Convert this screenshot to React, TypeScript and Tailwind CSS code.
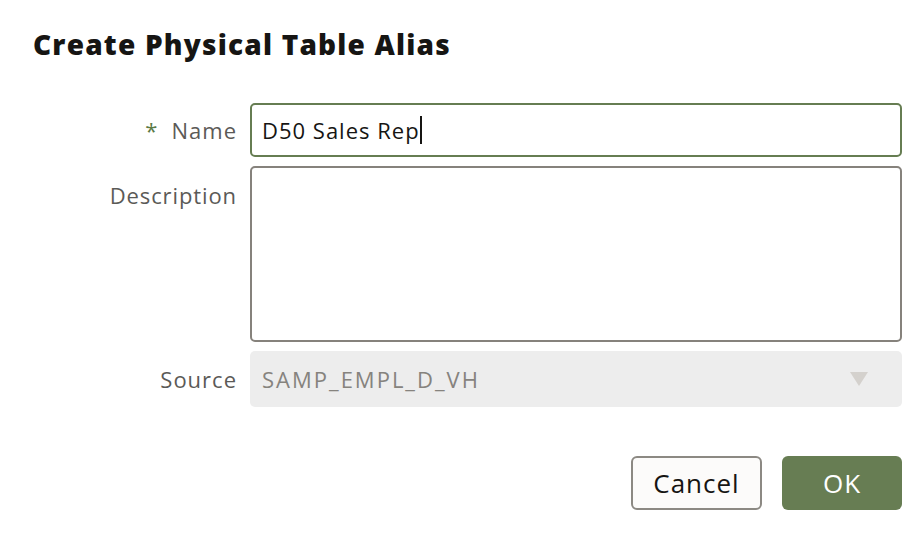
export default function App() {
  return (
    <div className="w-[924px] h-[540px] bg-white font-['Open_Sans',sans-serif] text-[#161513] overflow-hidden">
      <h1 className="pl-[33px] pt-[24px] text-[28px] font-extrabold leading-[40px] tracking-[1.2px]">
        Create Physical Table Alias
      </h1>

      <div className="mt-[39px] grid grid-cols-[237px_652px] gap-x-[13px] gap-y-[9px]">
        <label className="flex items-center justify-end text-[22px] text-[#5b5a57] tracking-[1px]">
          <span className="mr-[13px] text-[#5b7a45]">*</span>Name
        </label>
        <div className="h-[54px] rounded-[5px] border-2 border-[#667d52] flex items-center px-[10px] text-[22px] tracking-[1px]">
          D50 Sales Rep
          <span className="ml-[0px] w-[2px] h-[28px] bg-[#161513]" />
        </div>

        <label className="flex justify-end pt-[13px] text-[22px] text-[#5b5a57] leading-[32px] tracking-[0.9px]">
          Description
        </label>
        <div className="h-[176px] rounded-[5px] border-2 border-[#86827c]" />

        <label className="flex items-center justify-end text-[22px] text-[#5b5a57] tracking-[1px]">
          Source
        </label>
        <div className="h-[56px] rounded-[5px] bg-[#ededed] flex items-center justify-between pl-[12px] pr-[34px] text-[22px] text-[#86837e] tracking-[2px]">
          <span>SAMP_EMPL_D_VH</span>
          <svg width="18" height="14" viewBox="0 0 18 14">
            <path d="M0 0 L18 0 L9 14 Z" fill="#d4d1cd" />
          </svg>
        </div>
      </div>

      <div className="mt-[49px] pr-[22px] flex justify-end gap-[20px]">
        <button className="w-[131px] h-[54px] rounded-[6px] border-2 border-[#8c8983] bg-[#fcfbfa] text-[26px] text-[#161513] tracking-[1px]">
          Cancel
        </button>
        <button className="w-[120px] h-[54px] rounded-[6px] bg-[#677d53] text-[26px] text-white tracking-[1px]">
          OK
        </button>
      </div>
    </div>
  );
}
